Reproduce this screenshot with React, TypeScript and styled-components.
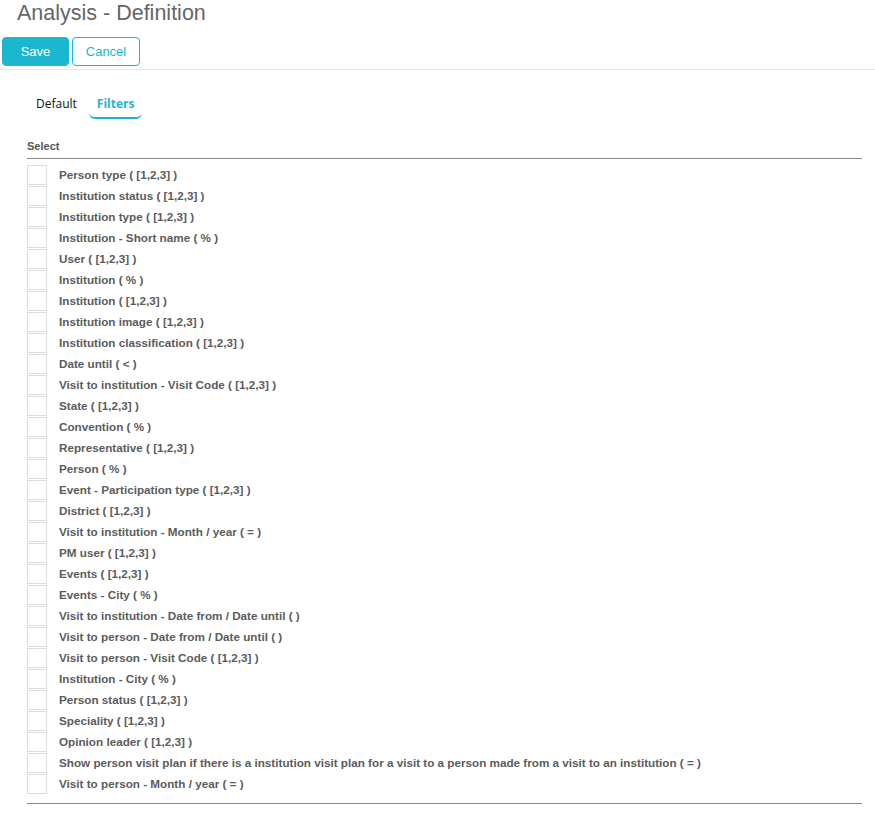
import React, { useState } from "react";
import styled, { createGlobalStyle } from "styled-components";

const GlobalStyle = createGlobalStyle`
  html, body { margin: 0; padding: 0; background: #fff; }
  body { font-family: "Liberation Sans", Arial, sans-serif; }
  * { box-sizing: border-box; }
`;

const TEAL = "#1bb7d1";

const Page = styled.div`
  width: 875px;
  min-height: 814px;
`;

const Title = styled.h1`
  margin: 0;
  padding: 0 0 0 17px;
  height: 30px;
  line-height: 26px;
  font-size: 21.5px;
  font-weight: normal;
  color: #666;
`;

const Toolbar = styled.div`
  display: flex;
  gap: 3px;
  padding: 7px 0 3px 2px;
  border-bottom: 1px solid #e6e6e6;
`;

const Button = styled.button<{ $primary?: boolean }>`
  height: 29px;
  padding: 0;
  width: ${(p) => (p.$primary ? "67px" : "68px")};
  border-radius: 4px;
  border: 1px solid ${TEAL};
  background: ${(p) => (p.$primary ? TEAL : "#fff")};
  color: ${(p) => (p.$primary ? "#fff" : TEAL)};
  font-family: "Liberation Sans", Arial, sans-serif;
  font-size: 13px;
  cursor: pointer;
`;

const Tabs = styled.div`
  display: flex;
  gap: 4px;
  padding: 20px 0 0 28px;
`;

const Tab = styled.div<{ $active?: boolean }>`
  padding: 0 8px;
  height: 29px;
  line-height: 28px;
  font-family: "Open Sans", sans-serif;
  font-size: 12px;
  font-weight: ${(p) => (p.$active ? 700 : 500)};
  color: ${(p) => (p.$active ? TEAL : "#111")};
  border-bottom: 2px solid ${(p) => (p.$active ? TEAL : "transparent")};
  border-radius: 0 0 6px 6px;
  cursor: pointer;
`;

const Section = styled.div`
  margin: 18px 13px 0 27px;
  border-bottom: 1px solid #888;
  padding-bottom: 9px;
`;

const SectionHead = styled.div`
  font-size: 11px;
  font-weight: bold;
  color: #555;
  height: 22px;
  line-height: 18px;
  border-bottom: 1px solid #888;
  margin-bottom: 6px;
`;

const List = styled.div`
  display: flex;
  flex-direction: column;
  gap: 1px;
`;

const Row = styled.label`
  display: flex;
  align-items: center;
  height: 20px;
  cursor: pointer;
`;

const Box = styled.span<{ $checked: boolean }>`
  width: 20px;
  height: 20px;
  border: 1px solid #ddd;
  background: #fff;
  flex: none;
  display: flex;
  align-items: center;
  justify-content: center;
  color: ${TEAL};
  font-size: 13px;
`;

const Label = styled.span`
  margin-left: 12px;
  margin-top: -2px;
  font-size: 11.7px;
  font-weight: bold;
  color: #5c5c5c;
  white-space: nowrap;
`;

const items = [
  "Person type ( [1,2,3] )",
  "Institution status ( [1,2,3] )",
  "Institution type ( [1,2,3] )",
  "Institution - Short name ( % )",
  "User ( [1,2,3] )",
  "Institution ( % )",
  "Institution ( [1,2,3] )",
  "Institution image ( [1,2,3] )",
  "Institution classification ( [1,2,3] )",
  "Date until ( < )",
  "Visit to institution - Visit Code ( [1,2,3] )",
  "State ( [1,2,3] )",
  "Convention ( % )",
  "Representative ( [1,2,3] )",
  "Person ( % )",
  "Event - Participation type ( [1,2,3] )",
  "District ( [1,2,3] )",
  "Visit to institution - Month / year ( = )",
  "PM user ( [1,2,3] )",
  "Events ( [1,2,3] )",
  "Events - City ( % )",
  "Visit to institution - Date from / Date until ( )",
  "Visit to person - Date from / Date until ( )",
  "Visit to person - Visit Code ( [1,2,3] )",
  "Institution - City ( % )",
  "Person status ( [1,2,3] )",
  "Speciality ( [1,2,3] )",
  "Opinion leader ( [1,2,3] )",
  "Show person visit plan if there is a institution visit plan for a visit to a person made from a visit to an institution ( = )",
  "Visit to person - Month / year ( = )",
];

export default function App() {
  const [checked, setChecked] = useState<boolean[]>(items.map(() => false));
  const [tab, setTab] = useState("Filters");
  return (
    <Page>
      <GlobalStyle />
      <Title>Analysis - Definition</Title>
      <Toolbar>
        <Button $primary>Save</Button>
        <Button>Cancel</Button>
      </Toolbar>
      <Tabs>
        {["Default", "Filters"].map((t) => (
          <Tab key={t} $active={tab === t} onClick={() => setTab(t)}>
            {t}
          </Tab>
        ))}
      </Tabs>
      <Section>
        <SectionHead>Select</SectionHead>
        <List>
          {items.map((it, i) => (
            <Row
              key={i}
              onClick={() =>
                setChecked((c) => c.map((v, j) => (j === i ? !v : v)))
              }
            >
              <Box $checked={checked[i]}>{checked[i] ? "✓" : ""}</Box>
              <Label>{it}</Label>
            </Row>
          ))}
        </List>
      </Section>
    </Page>
  );
}
